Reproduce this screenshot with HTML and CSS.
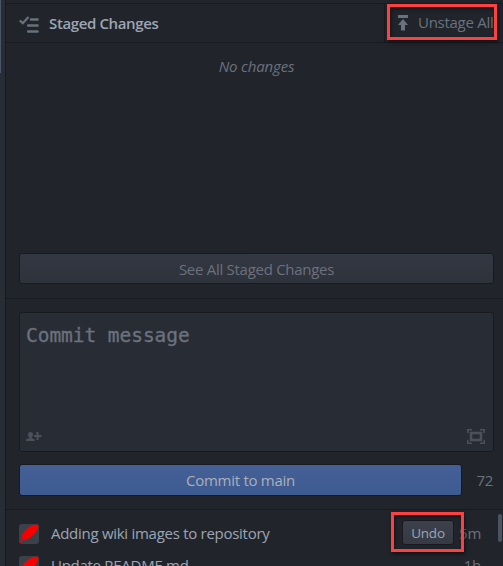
FILE: index.html
```html
<!DOCTYPE html>
<html lang="en">
<head>
<meta charset="utf-8">
<title>Staged Changes</title>
<link rel="stylesheet" href="styles.css">
</head>
<body>
<div class="gutter"><div class="gutter-thumb"></div></div>
<main class="panel">
  <header class="header">
    <svg class="icon-list" width="21" height="19" viewBox="0 0 21 19" fill="none" stroke="currentColor"><path d="M.8 5.500l3 2.700L9.500 2" stroke-width="2.300"/><path d="M12 4.500h6.500M9.200 10.500h9.300M9.200 16.500h9.300" stroke-width="2.600" stroke-linecap="round"/></svg>
    <h1 class="title">Staged Changes</h1>
    <button class="unstage">
      <svg width="12" height="16" viewBox="0 0 12 16" fill="currentColor"><path d="M1 0h10v3H1zM6 4l5 6H8v5.500H4V10H1z"/></svg>
      <span class="unstage-label">Unstage All</span>
      <span class="mark mark-unstage"></span>
    </button>
  </header>
  <section class="staged">
    <p class="empty">No changes</p>
    <button class="btn see-all"><span>See All Staged Changes</span></button>
  </section>
  <section class="commit">
    <div class="editor">
      <div class="placeholder">Commit message</div>
      <div class="tools">
        <svg width="16" height="12" viewBox="0 0 16 12" fill="currentColor"><path d="M4.500 1C6.300 1 7 2.100 7 3.600 7 5 6.400 6 5.700 6.400v.7l2.300 1c.6.3.8.8.8 1.900H0c0-1.100.2-1.600.8-1.900l2.500-1v-.7C2.600 6 2 5 2 3.600 2 2.100 2.700 1 4.500 1zM10.500 1h2v3H15.500v2h-3v3h-2V6H8V4h2.500z"/></svg>
        <svg width="18" height="15" viewBox="0 0 18 15" fill="none" stroke="currentColor"><path d="M.75 4V.75H5M13 .75h4.250V4M17.250 11v3.250H13M5 14.250H.75V11" stroke-width="1.500"/><path d="M4 4h10v7H4z" stroke-width="2.500"/></svg>
      </div>
    </div>
    <div class="actions">
      <button class="btn primary"><span>Commit to main</span></button>
      <span class="count">72</span>
    </div>
  </section>
  <section class="log">
    <div class="row">
      <svg class="avatar" width="20" height="20" viewBox="0 0 20 20"><path class="feather" d="M1 18.500L2.800 15.500C1.500 12 5 7 9.500 3.500 13 1 17 0 19.500.5 20 4.500 17 9 12.500 12.500 9.500 15 6.500 16.300 3.800 16L1.800 19z"/><path class="quill" d="M3 15.500Q9 10 14 5"/></svg>
      <span class="message">Adding wiki images to repository</span>
      <button class="undo"><span>Undo</span><span class="mark mark-undo"></span></button>
      <span class="time">5m</span>
    </div>
    <div class="row">
      <svg class="avatar" width="20" height="20" viewBox="0 0 20 20"><path class="feather" d="M1 18.500L2.800 15.500C1.500 12 5 7 9.500 3.500 13 1 17 0 19.500.5 20 4.500 17 9 12.500 12.500 9.500 15 6.500 16.300 3.800 16L1.800 19z"/><path class="quill" d="M3 15.500Q9 10 14 5"/></svg>
      <span class="message">Update README.md</span>
      <span class="time">1h</span>
    </div>
    <div class="scroll-thumb"></div>
  </section>
</main>
</body>
</html>
```
FILE: styles.css
```css
* { box-sizing: border-box; }
body {
  margin: 0;
  width: 503px;
  height: 566px;
  overflow: hidden;
  display: flex;
  background: #21252b;
  color: #9da5b4;
  font: 15px/20px "Open Sans", "Noto Sans", sans-serif;
  letter-spacing: -0.28px;
}
button {
  font: inherit;
  letter-spacing: inherit;
  padding: 0;
  border: 0;
  background: none;
  color: inherit;
}
svg { display: block; flex: none; }
.gutter { width: 6px; background: #282c34; border-right: 1px solid #181a1f; }
.gutter-thumb { width: 1px; height: 73px; background: #4b5569; }
.panel { flex: 1; min-width: 0; display: flex; flex-direction: column; padding-top: 3px; }
.header {
  height: 40px;
  display: flex;
  align-items: center;
  border: solid #181a1f;
  border-width: 1px 0;
  padding-left: 13px;
}
.icon-list { color: #6a707c; margin-top: 3px; }
.title { flex: 1; margin: -1px 0 0 9px; font-size: 15px; font-weight: 600; letter-spacing: -0.37px; white-space: nowrap; }
.unstage {
  position: relative;
  width: 119px;
  height: 38px;
  display: flex;
  align-items: center;
  padding-left: 12px;
  border-left: 1px solid #181a1f;
  color: #6b717d;
}
.unstage-label { margin: -2px 0 0 9px; white-space: nowrap; }
.mark { position: absolute; border: 3px solid #fb4141; box-shadow: 1px 2px 4px rgba(0,0,0,.55), inset 1px 2px 4px rgba(0,0,0,.45); }
.mark-unstage { left: 2px; top: 0; width: 110px; height: 36px; }
.staged {
  height: 256px;
  display: flex;
  flex-direction: column;
  justify-content: space-between;
  padding: 13px 9px 14px 13px;
  border-bottom: 1px solid #181a1f;
}
.empty { margin: 0; text-align: center; font-style: italic; letter-spacing: -0.15px; color: #6b717d; }
.btn { border: 1px solid #181a1f; border-radius: 3px; text-align: center; }
.see-all { height: 31px; background: linear-gradient(#333842, #2e323b); color: #6b717d; }
.commit { height: 211px; padding: 13px 9px 0 13px; border-bottom: 1px solid #181a1f; }
.editor {
  height: 140px;
  display: flex;
  flex-direction: column;
  justify-content: space-between;
  padding: 10px 8px 7px 6px;
  border: 1px solid #181a1f;
  border-radius: 3px;
  background: #282c34;
}
.placeholder { font: 19.5px/26px "DejaVu Sans Mono", monospace; letter-spacing: -0.05px; color: #6b717d; -webkit-text-stroke: .35px #6b717d; }
.tools { display: flex; justify-content: space-between; align-items: center; color: #4b505b; }
.actions { display: flex; align-items: center; margin-top: 12px; }
.primary { width: 443px; height: 32px; padding-bottom: 1px; background: linear-gradient(#446097, #3d5a91); color: #abb0b9; }
.count { flex: 1; padding-right: 1px; text-align: right; color: #6b717d; }
.log { position: relative; flex: 1; min-height: 0; padding: 8px 22px 0 13px; overflow: hidden; }
.row { height: 32px; display: flex; align-items: center; }
.avatar { border-radius: 3px; background: #3c4048; }
.feather { fill: #f90000; }
.quill { fill: none; stroke: #c80808; stroke-width: .6; }
.message { flex: 1; margin: -2px 0 0 12px; white-space: nowrap; }
.undo {
  position: relative;
  width: 52px;
  height: 25px;
  margin: -3px 6px 0 0;
  border: 1px solid #181a1f;
  border-radius: 3px;
  background: linear-gradient(#3b404b, #353a43);
  font-size: 13.5px;
  letter-spacing: -0.2px;
}
.mark-undo { left: -12px; top: -9px; width: 73px; height: 40px; }
.time { width: 21px; margin-top: -2px; display: flex; justify-content: flex-end; color: #6b717d; }
.scroll-thumb { position: absolute; right: 1px; top: 4px; width: 4px; height: 28px; border-radius: 2px; background: #4b5362; }
```
